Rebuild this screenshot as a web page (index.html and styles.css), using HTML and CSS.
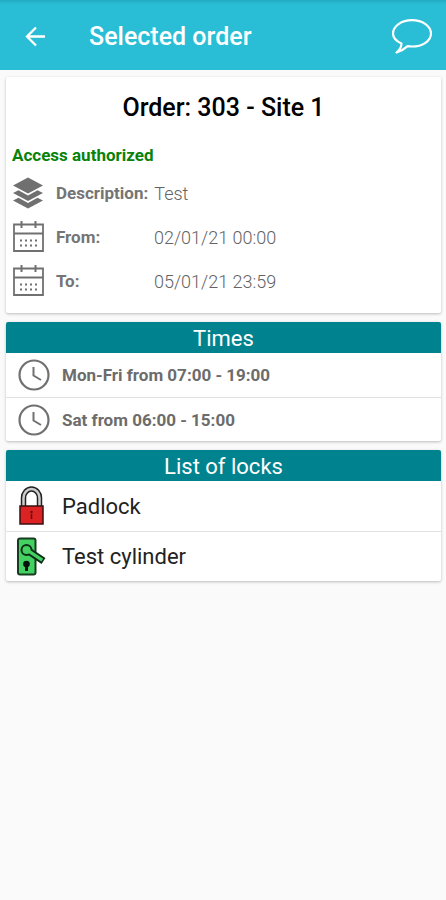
FILE: index.html
```html
<!DOCTYPE html>
<html lang="en">
<head>
<meta charset="utf-8">
<meta name="viewport" content="width=device-width, initial-scale=1">
<title>Selected order</title>
<link rel="stylesheet" href="styles.css">
</head>
<body>
<svg class="defs" aria-hidden="true">
  <symbol id="calendar" viewBox="0 0 32 32">
    <path fill="none" stroke="currentColor" stroke-width="1.800" d="M2 3.500H31V30H2ZM2 12.500H31"/>
    <path fill="none" stroke="currentColor" stroke-width="2" d="M9.500 0V7M23.500 0V7"/>
    <path fill="none" stroke="currentColor" stroke-width="2" stroke-dasharray="2 3" d="M8 19.500H25M8 24.500H25"/>
  </symbol>
  <symbol id="clock" viewBox="0 0 32 32">
    <circle cx="16" cy="16" r="14.500" fill="none" stroke="currentColor" stroke-width="2.200"/>
    <path fill="none" stroke="currentColor" stroke-width="2" d="M15.500 8V16.500L23 21"/>
  </symbol>
</svg>
<header class="bar">
  <button class="icon-button" type="button" aria-label="Back">
    <svg width="24" height="24" viewBox="0 0 24 24"><path fill="none" stroke="currentColor" stroke-width="2.300" d="M21 11.500H3M12 2.500L3 11.500L12 20.500"/></svg>
  </button>
  <h1 class="bar-title">Selected order</h1>
  <button class="icon-button" type="button" aria-label="Messages">
    <svg width="42" height="36" viewBox="0 0 42 36"><path fill="none" stroke="currentColor" stroke-width="2.200" stroke-linejoin="round" d="M10.500 24.500C5 22 2 18.500 2 14.500C2 7 10.500 1.200 21 1.200S40 7 40 14.500S31.500 27.500 21 27.500C19.500 27.500 18 27.400 16.600 27.100C13.500 30 10 32 5.500 33.500C8.500 31 10.500 28 10.500 24.500Z"/></svg>
  </button>
</header>
<main class="content">
  <section class="card order">
    <h2 class="order-title">Order: 303 - Site 1</h2>
    <p class="status">Access authorized</p>
    <dl class="details">
      <div class="detail">
        <svg class="icon" viewBox="0 0 32 32" fill="currentColor"><path d="M16 0.500L31 8.500L16 16.500L1 8.500Z"/><path d="M1 16L6.500 13.300L16 18.500L25.500 13.300L31 16L16 24Z"/><path d="M1 23.500L6.500 20.800L16 26L25.500 20.800L31 23.500L16 31.500Z"/></svg>
        <dt class="inline-label">Description:</dt><dd>Test</dd>
      </div>
      <div class="detail">
        <svg class="icon"><use href="#calendar"/></svg>
        <dt class="label">From:</dt><dd>02/01/21 00:00</dd>
      </div>
      <div class="detail">
        <svg class="icon"><use href="#calendar"/></svg>
        <dt class="label">To:</dt><dd>05/01/21 23:59</dd>
      </div>
    </dl>
  </section>
  <section class="card">
    <h2 class="section-title">Times</h2>
    <ul class="list">
      <li class="row time"><svg class="icon"><use href="#clock"/></svg>Mon-Fri from 07:00 - 19:00</li>
      <li class="row time"><svg class="icon"><use href="#clock"/></svg>Sat from 06:00 - 15:00</li>
    </ul>
  </section>
  <section class="card">
    <h2 class="section-title">List of locks</h2>
    <ul class="list">
      <li class="row lock">
        <svg class="lock-icon" viewBox="0 0 32 40">
          <path fill="none" stroke="#222" stroke-width="5.500" d="M7.500 21V12A8 9 0 0 1 23.500 12V21"/>
          <path fill="none" stroke="#ccc" stroke-width="2.500" d="M7.500 21V12A8 9 0 0 1 23.500 12V21"/>
          <path fill="#dc2222" stroke="#3a1010" stroke-width="1.500" d="M4 20H27V38H4Z"/>
          <circle cx="15.500" cy="26" r="1.200" fill="#511"/>
          <path fill="none" stroke="#511" stroke-width="1.500" d="M15.500 28V33"/>
        </svg>Padlock</li>
      <li class="row lock">
        <svg class="lock-icon" viewBox="0 0 32 40">
          <rect x="2" y="1.500" width="17.500" height="36" rx="2" fill="#43d162" stroke="#173c20" stroke-width="2"/>
          <path d="M11 13L27.500 24" fill="none" stroke="#102d18" stroke-width="7"/>
          <circle cx="10.500" cy="13" r="5" fill="#43d162" stroke="#102d18" stroke-width="2"/>
          <path d="M12 13.700L26.300 23.200" fill="none" stroke="#43d162" stroke-width="3.200"/>
          <circle cx="10.500" cy="27" r="3.300" fill="#061109"/>
          <path fill="#061109" d="M9 28H12V34H9Z"/>
        </svg>Test cylinder</li>
    </ul>
  </section>
</main>
</body>
</html>
```

FILE: styles.css
```css
* { box-sizing: border-box; }
body {
  margin: 0;
  min-height: 100vh;
  background: #fafafa;
  color: #222;
  font-family: Roboto, "Liberation Sans", sans-serif;
}
h1, h2, p, dl, dd, ul { margin: 0; padding: 0; }
.defs { display: none; }
.bar {
  display: flex;
  align-items: center;
  height: 70px;
  padding: 4px 13px 0 24px;
  background: linear-gradient(#24a9c2, #29bdd6 4px);
  color: #fff;
}
.icon-button {
  display: flex;
  padding: 0;
  border: 0;
  background: none;
  color: inherit;
}
.bar-title {
  flex: 1;
  margin-left: 41px;
  font-size: 25px;
  font-weight: 500;
  line-height: 32px;
}
.content {
  display: flex;
  flex-direction: column;
  gap: 9px;
  padding: 7px 5px 7px 6px;
}
.card {
  overflow: hidden;
  border-radius: 2px;
  background: #fff;
  box-shadow: 0 1px 3px rgba(0, 0, 0, 0.25);
}
.order { padding: 15px 6px 10px; }
.order-title {
  color: #000;
  font-size: 25px;
  font-weight: 500;
  line-height: 32px;
  text-align: center;
}
.status {
  margin-top: 19px;
  color: #098209;
  font-size: 17px;
  font-weight: 700;
  line-height: 24px;
}
.details { margin-top: 4px; }
.detail {
  display: flex;
  align-items: center;
  height: 44px;
  color: #757575;
  font-size: 18px;
}
.detail dt {
  font-size: 17px;
  font-weight: 700;
}
.detail dd {
  color: #636363;
  font-weight: 300;
}
.icon {
  flex: none;
  width: 32px;
  height: 32px;
  margin-right: 12px;
  color: #707070;
}
.inline-label { margin-right: 6px; }
.label { width: 98px; }
.section-title {
  padding-top: 3px;
  background: #00838f;
  color: #fff;
  font-size: 22px;
  font-weight: 400;
  line-height: 28px;
  text-align: center;
}
.list { list-style: none; }
.row {
  display: flex;
  align-items: center;
  padding: 0 12px;
}
.row + .row { border-top: 1px solid #e2e2e2; }
.time {
  height: 44px;
  color: #6c6c6c;
  font-size: 17px;
  font-weight: 700;
}
.lock {
  height: 50px;
  padding-left: 10px;
  font-size: 22px;
}
.lock-icon {
  flex: none;
  width: 32px;
  height: 40px;
  margin-right: 14px;
}
```
